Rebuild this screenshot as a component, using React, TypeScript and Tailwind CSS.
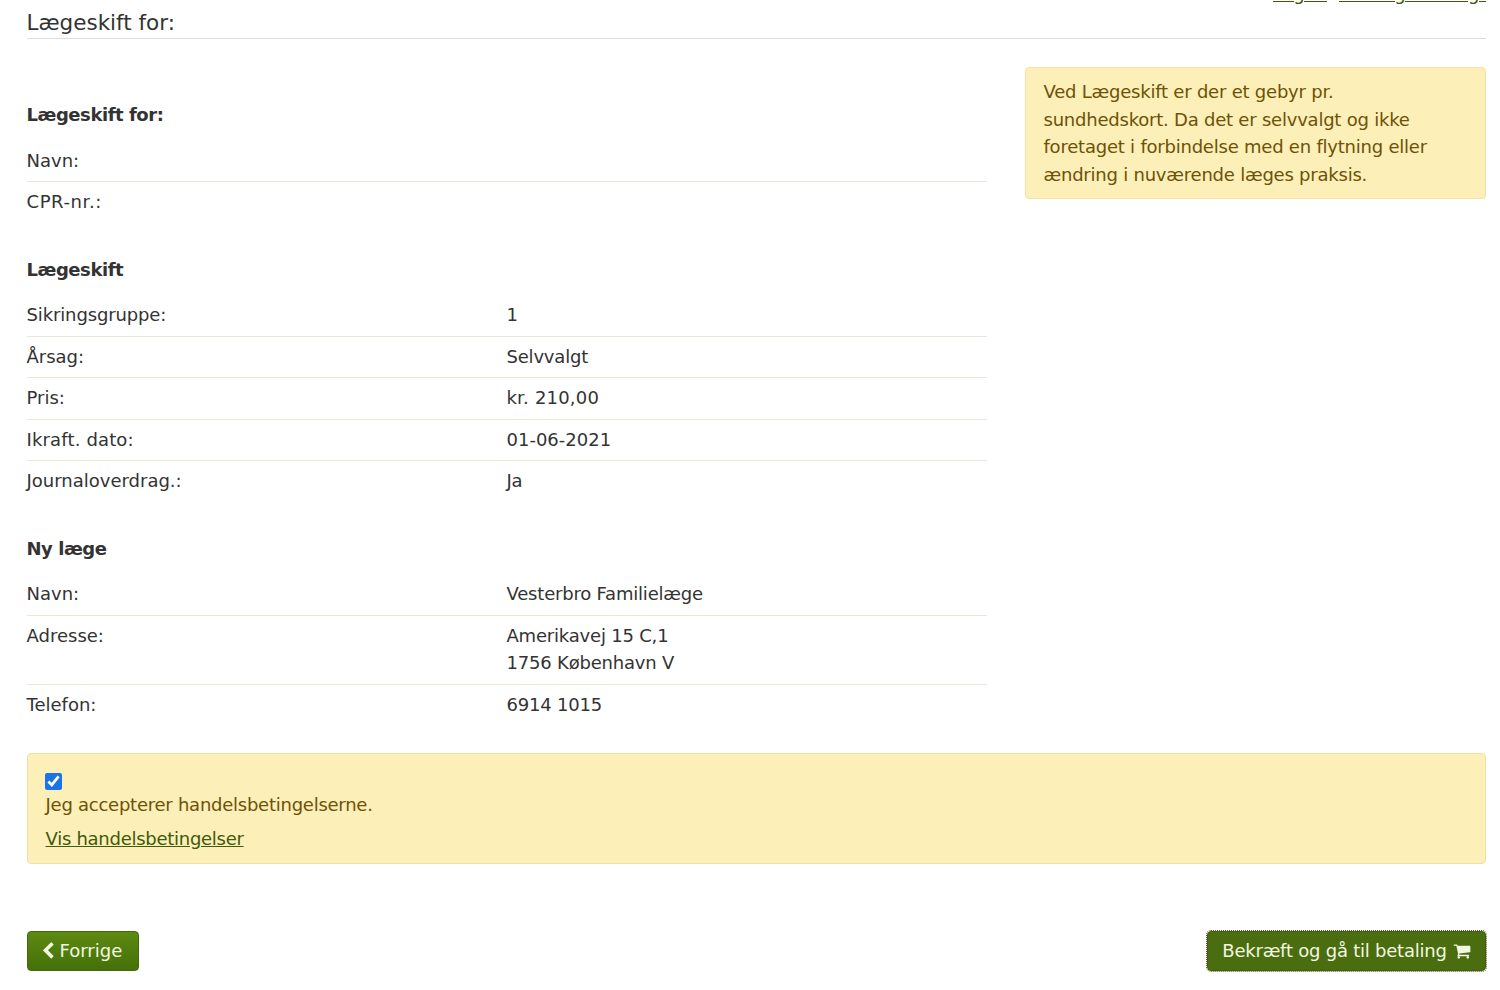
interface RowProps {
  label: string;
  labelClass?: string;
  valueClass?: string;
  children?: React.ReactNode;
  last?: boolean;
}

function Row({ label, labelClass, valueClass, children, last }: RowProps) {
  return (
    <div className={"flex pt-[6px] pb-[7px] " + (last ? "" : "border-b-[1.5px] border-[#e8ead9]")}>
      <div className={"w-[480px] shrink-0 " + (labelClass ?? "")}>{label}</div>
      <div className={valueClass ?? "tracking-[-0.2px]"}>{children}</div>
    </div>
  );
}

function Heading({ children }: { children: React.ReactNode }) {
  return <h3 className="font-bold tracking-[-0.45px] mb-[12px]">{children}</h3>;
}

function ChevronLeft() {
  return (
    <svg viewBox="0 0 1792 1792" fill="currentColor" className="h-[18px] w-[18px] shrink-0">
      <path d="M1427 301l-531 531 531 531q19 19 19 45t-19 45l-166 166q-19 19-45 19t-45-19l-742-742q-19-19-19-45t19-45l742-742q19-19 45-19t45 19l166 166q19 19 19 45t-19 45z" />
    </svg>
  );
}

function Cart() {
  return (
    <svg viewBox="0 0 1792 1792" fill="currentColor" className="h-[18px] w-[18px] shrink-0">
      <path d="M704 1536q0 52-38 90t-90 38-90-38-38-90 38-90 90-38 90 38 38 90zm896 0q0 52-38 90t-90 38-90-38-38-90 38-90 90-38 90 38 38 90zm128-1088v512q0 24-16.5 42.5t-40.5 21.5l-1044 122q13 60 13 70 0 16-24 64h920q26 0 45 19t19 45-19 45-45 19h-1024q-26 0-45-19t-19-45q0-11 8-31.5t16-36 21.5-40 15.5-29.5l-177-823h-204q-26 0-45-19t-19-45 19-45 45-19h256q16 0 28.5 6.5t19.5 15.5 13 24.5 8 26 5.5 29.5 4.5 26h1201q26 0 45 19t19 45z" />
    </svg>
  );
}

export default function App() {
  return (
    <div className="h-[990px] overflow-hidden bg-white pl-[26.5px] pr-[14px] font-['DejaVu_Sans',Verdana,sans-serif] text-[18px] leading-[27.5px] text-[#333]">
      <div className="h-[4px]">
        <div className="flex justify-end gap-[12px] -translate-y-[20px] text-[#3f5a0c] tracking-[-0.2px]">
          <a className="underline">Log af</a>
          <a className="underline">Din sagsoversigt</a>
        </div>
      </div>
      <h2 className="text-[21.5px] leading-[34px] border-b-[1.5px] border-[#ddd] h-[35px] pt-[2px]">Lægeskift for:</h2>

      <div className="flex justify-between">
        <div className="w-[960px] pt-[62px]">
          <Heading>Lægeskift for:</Heading>
          <Row label="Navn:" />
          <Row label="CPR-nr.:" labelClass="tracking-[0.6px]" last />

          <div className="h-[33px]" />
          <Heading>Lægeskift</Heading>
          <Row label="Sikringsgruppe:" labelClass="tracking-[-0.13px]">1</Row>
          <Row label="Årsag:">Selvvalgt</Row>
          <Row label="Pris:" valueClass="tracking-[0.2px]">kr. 210,00</Row>
          <Row label="Ikraft. dato:" labelClass="tracking-[0.15px]" valueClass="tracking-normal">01-06-2021</Row>
          <Row label="Journaloverdrag.:" last>Ja</Row>

          <div className="h-[33px]" />
          <Heading>Ny læge</Heading>
          <Row label="Navn:">Vesterbro Familielæge</Row>
          <Row label="Adresse:">
            Amerikavej 15 C,1
            <br />
            1756 København V
          </Row>
          <Row label="Telefon:" last>6914 1015</Row>
        </div>

        <div className="w-[461.5px] mt-[28px] self-start rounded-[4px] border border-[#f3e2a6] bg-[#fcefb8] pl-[18px] pr-[36px] py-[10px] text-[#6e5207] tracking-[-0.22px]">
          Ved Lægeskift er der et gebyr pr. sundhedskort. Da det er selvvalgt og ikke foretaget i forbindelse med en flytning eller ændring i nuværende læges praksis.
        </div>
      </div>

      <div className="mt-[28px] h-[111px] rounded-[4px] border border-[#f0e0a4] bg-[#fcefb8] px-[18px] pt-[19px] text-[#6e5207]">
        <div className="h-[18px]">
          <input type="checkbox" defaultChecked readOnly className="-ml-[1px] block h-[17px] w-[17px] accent-[#1a73e8]" />
        </div>
        <div className="tracking-[-0.25px]">Jeg accepterer handelsbetingelserne.</div>
        <a className="mt-[6px] block text-[#3f5a0c] underline tracking-[-0.27px]">Vis handelsbetingelser</a>
      </div>

      <div className="mt-[67px] flex items-center justify-between">
        <button className="flex h-[40px] w-[112.5px] items-center gap-[3px] rounded-[4px] border border-[#44660c] bg-gradient-to-b from-[#5c8a12] to-[#467009] pl-[11px] text-[#f2f7e0]">
          <ChevronLeft />
          Forrige
        </button>
        <button className="flex h-[40px] w-[279px] items-center justify-center gap-[6px] rounded-[4px] border border-[#3f5f0b] bg-[#4a6d0f] text-[#f2f7e0] tracking-[-0.23px] outline outline-1 outline-dotted outline-offset-0 outline-[#6b5a3a]">
          Bekræft og gå til betaling
          <Cart />
        </button>
      </div>
    </div>
  );
}
